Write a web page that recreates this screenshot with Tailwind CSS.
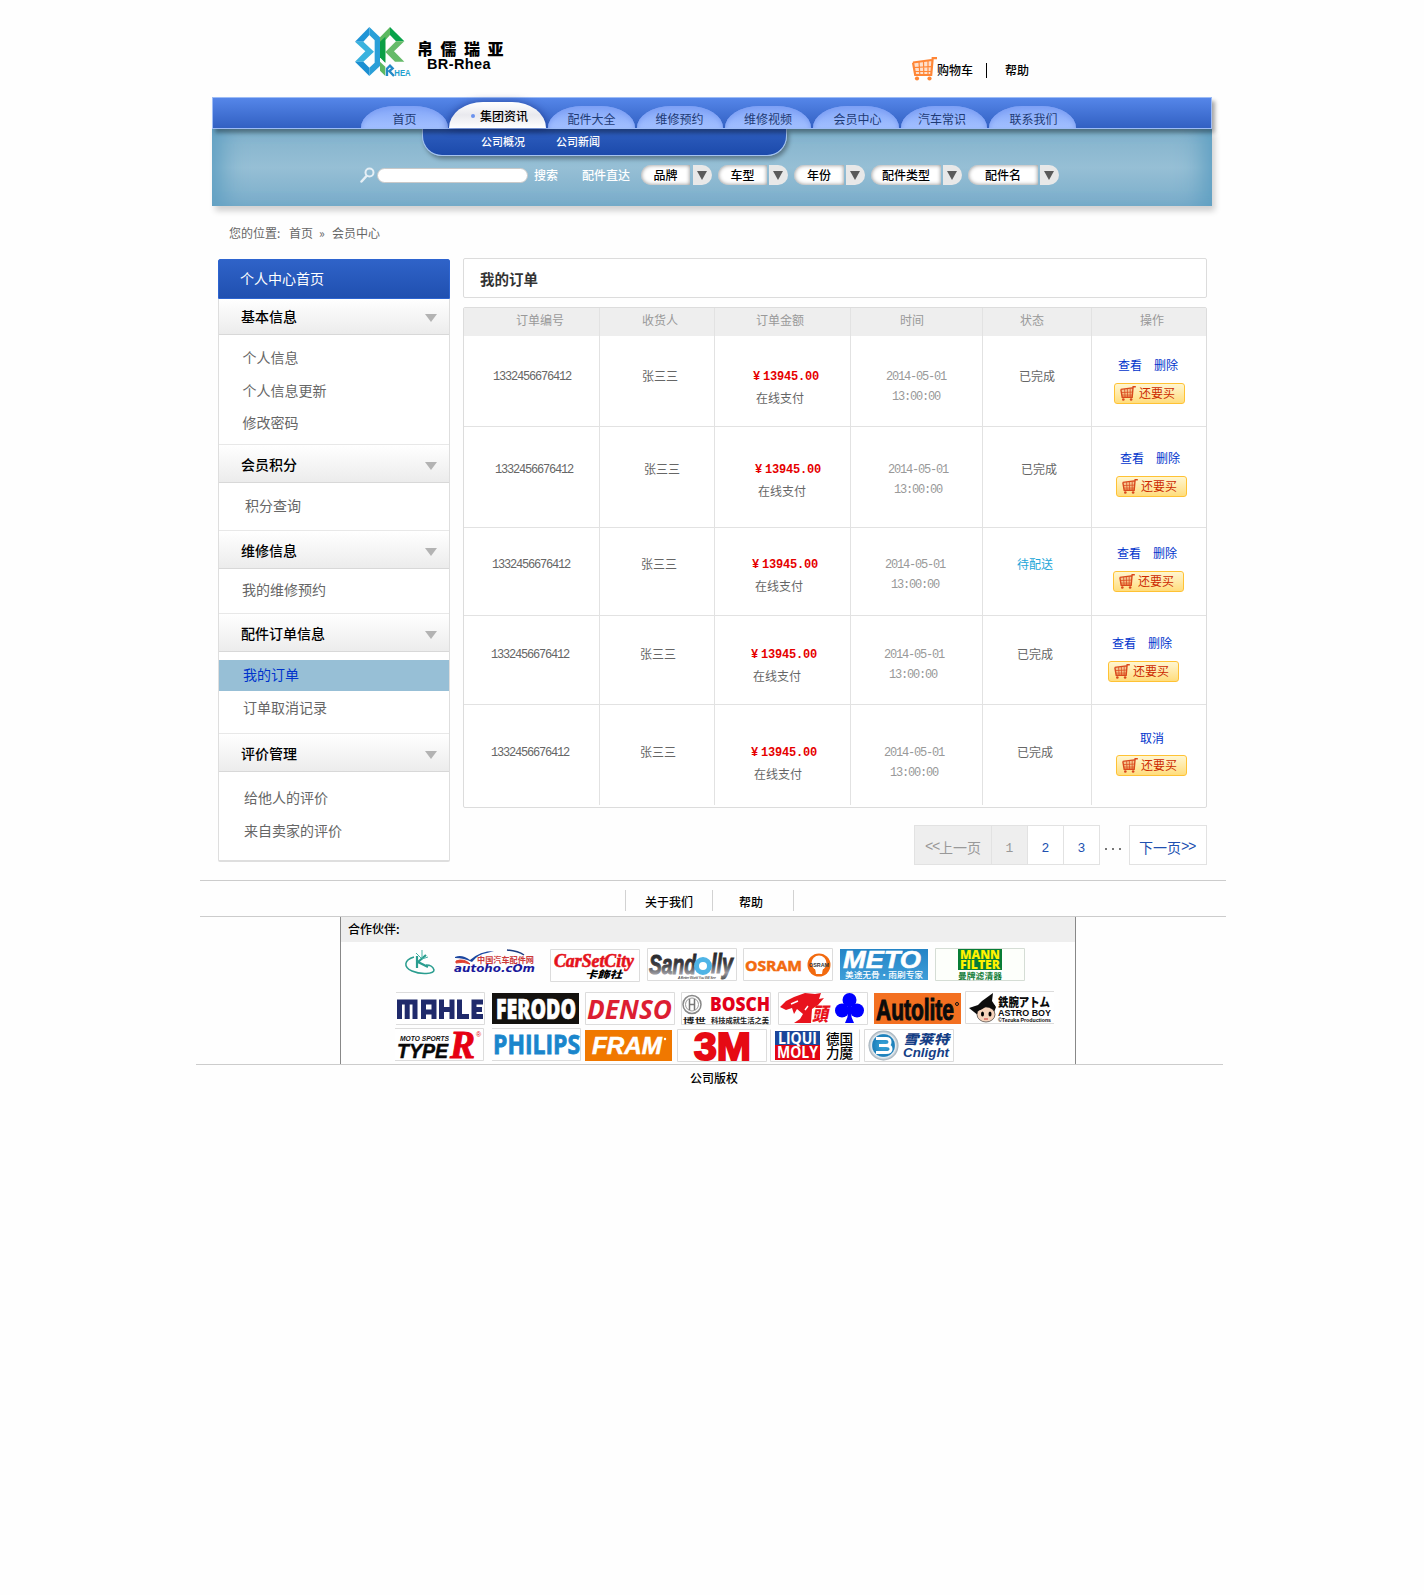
<!DOCTYPE html>
<html lang="zh-CN">
<head>
<meta charset="utf-8">
<title>我的订单</title>
<script src="https://cdn.jsdelivr.net/npm/@tailwindcss/browser@4"></script>
</head>
<body class="bg-[#fefefe]">
<svg class="absolute size-0">
  <defs>
    <symbol id="cart" viewBox="0 0 25 24">
      <path d="M1 6 20.500 3 19.500 17.500H3Z" fill="currentColor" fill-opacity=".25"/>
      <path d="M1.500 10.500l18-.8M2.500 14.500h17M7 5l.8 12.500M11.500 4.500l.3 13M16 3.500v14" fill="none" stroke="currentColor" stroke-width="1.200"/>
      <path d="M1 5.500 19.500 3M1 5.500 3.200 18H19.200L20.700 1.200H25" fill="none" stroke="currentColor" stroke-width="2.200"/>
      <circle cx="5" cy="21.500" r="2.100" fill="currentColor"/><circle cx="17.500" cy="21.500" r="2.100" fill="currentColor"/>
    </symbol>
    <linearGradient id="silver" x1="0" x2="0" y1="0" y2="1"><stop offset="0" stop-color="#1c1c1e"/><stop offset=".5" stop-color="#3c3c40"/><stop offset=".8" stop-color="#9a9aa0"/><stop offset="1" stop-color="#555"/></linearGradient>
    <linearGradient id="sky" x1="0" x2="0" y1="0" y2="1"><stop offset="0" stop-color="#2484c6"/><stop offset="1" stop-color="#3f9ed8"/></linearGradient>
    <radialGradient id="orb"><stop offset="0" stop-color="#3aa9dc"/><stop offset=".72" stop-color="#1d7fba"/><stop offset=".8" stop-color="#e8eef2"/><stop offset="1" stop-color="#9aa9b4"/></radialGradient>
  </defs>
</svg>
<div class="flex h-[1595px] w-[1424px] flex-col overflow-hidden font-['Noto_Sans_CJK_SC',sans-serif] text-[12px] leading-[18px] text-[#666]">

  <!-- Logo and account links -->
  <header class="flex h-[97px] shrink-0 items-start pl-[355px] text-black">
    <svg class="mt-[27px] h-[49px] w-[56px] overflow-visible" viewBox="465 51 168 147">
      <path d="M508 51 540 82V168L508 198V173L524 158V91L508 75Z" fill="#2a9fd8"/>
      <path d="M508 51 465 95H490L508 75Z" fill="#1f94d6"/>
      <path d="M465 95H490L522 125 490 155H465L496 124Z" fill="#3ab2de"/>
      <path d="M465 155 508 198V173L490 155Z" fill="#1b8fd2"/>
      <path d="M570 51 540 82V142L556 158V91L570 75Z" fill="#5cb860"/>
      <path d="M570 51 613 94H588L570 75Z" fill="#08a24a"/>
      <path d="M588 94H613L582 124 613 155H585L556 126Z" fill="#66bb6a"/>
      <path d="M540 95 556 80V158L540 142Z" fill="#0a9f45"/>
      <path d="M540 155 556 170V198L540 182Z" fill="#5cb860"/>
      <path d="M561 198V176L570 167 578 175 568 183 582 198" fill="none" stroke="#2389c6" stroke-width="7"/>
      <text x="583" y="197" font-family="Liberation Sans" font-size="27" font-weight="bold" fill="#1fa0cf" textLength="49" lengthAdjust="spacingAndGlyphs">HEA</text>
    </svg>
    <div class="mt-[38px] ml-[6px] w-[96px]">
      <div class="h-[20px] text-[16px] leading-[20px] font-black tracking-[7.500px] whitespace-nowrap">帛儒瑞亚</div>
      <div class="pl-[10px] font-['Liberation_Sans',sans-serif] text-[14.500px] leading-[13px] font-bold tracking-[0.400px] whitespace-nowrap">BR-Rhea</div>
    </div>
    <svg class="mt-[57px] ml-[399px] h-[24px] w-[25px] text-[#ff8636]"><use href="#cart"/></svg>
    <span class="mt-[61px] font-medium">购物车</span>
    <span class="mt-[63px] ml-[13px] h-[15px] w-px bg-black"></span>
    <span class="mt-[61px] ml-[18px] font-medium">帮助</span>
  </header>

  <!-- Navigation -->
  <nav class="relative z-10 ml-[212px] flex h-[32px] w-[1000px] shrink-0 items-end border border-[#9dbcf6] bg-linear-to-b from-[#5586e9] to-[#3260c2] pl-[148px] text-[#1d3a75] shadow-[3px_4px_4px_rgba(0,0,0,0.35)]">
    <a class="h-[22px] w-[87px] rounded-[34px_34px_0_0/22px_22px_0_0] bg-linear-to-b from-[#82a5f8] to-[#a3c0ff] text-center leading-[26px] shadow-[inset_0_2px_5px_#7d9ff4]">首页</a>
    <a class="ml-px flex h-[26px] w-[97px] items-center rounded-[34px_34px_0_0/26px_26px_0_0] bg-linear-to-b from-white via-[#e9e9ee] to-white pt-[2px] pl-[22px] font-medium text-black shadow-[0_0_9px_rgba(10,30,110,0.6)]"><i class="mr-[5px] size-[4px] rounded-full bg-[#6a92ee]"></i>集团资讯</a>
    <a class="ml-[2px] h-[22px] w-[87px] rounded-[34px_34px_0_0/22px_22px_0_0] bg-linear-to-b from-[#82a5f8] to-[#a3c0ff] text-center leading-[26px] shadow-[inset_0_2px_5px_#7d9ff4]">配件大全</a>
    <a class="ml-[2px] h-[22px] w-[86px] rounded-[34px_34px_0_0/22px_22px_0_0] bg-linear-to-b from-[#82a5f8] to-[#a3c0ff] pr-[1px] text-center leading-[26px] shadow-[inset_0_2px_5px_#7d9ff4]">维修预约</a>
    <a class="ml-[2px] h-[22px] w-[86px] rounded-[34px_34px_0_0/22px_22px_0_0] bg-linear-to-b from-[#82a5f8] to-[#a3c0ff] text-center leading-[26px] shadow-[inset_0_2px_5px_#7d9ff4]">维修视频</a>
    <a class="ml-[2px] h-[22px] w-[86px] rounded-[34px_34px_0_0/22px_22px_0_0] bg-linear-to-b from-[#82a5f8] to-[#a3c0ff] pl-[3px] text-center leading-[26px] shadow-[inset_0_2px_5px_#7d9ff4]">会员中心</a>
    <a class="ml-[2px] h-[22px] w-[86px] rounded-[34px_34px_0_0/22px_22px_0_0] bg-linear-to-b from-[#82a5f8] to-[#a3c0ff] pr-[4px] text-center leading-[26px] shadow-[inset_0_2px_5px_#7d9ff4]">汽车常识</a>
    <a class="ml-[2px] h-[22px] w-[87px] rounded-[34px_34px_0_0/22px_22px_0_0] bg-linear-to-b from-[#82a5f8] to-[#a3c0ff] pl-[2px] text-center leading-[26px] shadow-[inset_0_2px_5px_#7d9ff4]">联系我们</a>
  </nav>
  <section class="ml-[212px] h-[77px] w-[1000px] shrink-0 bg-linear-to-b from-[#82b2cc] via-[#96bfd5] to-[#7aadca] shadow-[inset_24px_0_24px_-14px_#5f9fc2,inset_-24px_0_24px_-14px_#5f9fc2,3px_5px_6px_rgba(0,0,0,0.18)]">
    <div class="ml-[210px] flex h-[27px] w-[365px] rounded-b-[20px] border border-t-0 border-[#a5c3f0] bg-linear-to-b from-[#2f5fc0] to-[#1c4aab] pl-[58px] text-[11px] leading-[25px] font-medium text-white shadow-[2px_3px_4px_rgba(0,0,0,0.35)]">
      <span class="w-[75px]">公司概况</span><span>公司新闻</span>
    </div>
    <div class="mt-[9px] flex h-[20px] items-center pl-[148px] text-[12px] text-white">
      <svg class="h-[16px] w-[15px]" viewBox="0 0 15 16"><circle cx="9.500" cy="5.500" r="4" fill="none" stroke="#e6eff5" stroke-width="2"/><path d="M6.500 9 1.500 14.500" stroke="#e6eff5" stroke-width="2.500" stroke-linecap="round"/></svg>
      <span class="ml-[2px] h-[15px] w-[151px] rounded-full border border-[#c9c9c9] bg-white"></span>
      <span class="ml-[6px] font-medium">搜索</span>
      <span class="ml-[24px] w-[48px] font-medium">配件直达</span>
      <span class="ml-[11px] flex h-[20px] w-[49px] items-center justify-center rounded-l-full bg-white pb-px font-medium text-black shadow-[inset_0_0_4px_#888]">品牌</span>
      <span class="ml-[3px] flex h-[20px] w-[19px] items-center justify-center rounded-r-full bg-[#e8e8e8] pr-[2px]"><i class="size-0 border-x-[5px] border-t-[9px] border-x-transparent border-t-[#5a5a5a]"></i></span>
      <span class="ml-[6px] flex h-[20px] w-[49px] items-center justify-center rounded-l-full bg-white pb-px font-medium text-black shadow-[inset_0_0_4px_#888]">车型</span>
      <span class="ml-[2px] flex h-[20px] w-[19px] items-center justify-center rounded-r-full bg-[#e8e8e8] pr-[2px]"><i class="size-0 border-x-[5px] border-t-[9px] border-x-transparent border-t-[#5a5a5a]"></i></span>
      <span class="ml-[6px] flex h-[20px] w-[50px] items-center justify-center rounded-l-full bg-white pb-px font-medium text-black shadow-[inset_0_0_4px_#888]">年份</span>
      <span class="ml-[2px] flex h-[20px] w-[19px] items-center justify-center rounded-r-full bg-[#e8e8e8] pr-[2px]"><i class="size-0 border-x-[5px] border-t-[9px] border-x-transparent border-t-[#5a5a5a]"></i></span>
      <span class="ml-[6px] flex h-[20px] w-[70px] items-center justify-center rounded-l-full bg-white pb-px font-medium text-black shadow-[inset_0_0_4px_#888]">配件类型</span>
      <span class="ml-[2px] flex h-[20px] w-[19px] items-center justify-center rounded-r-full bg-[#e8e8e8] pr-[2px]"><i class="size-0 border-x-[5px] border-t-[9px] border-x-transparent border-t-[#5a5a5a]"></i></span>
      <span class="ml-[6px] flex h-[20px] w-[70px] items-center justify-center rounded-l-full bg-white pb-px font-medium text-black shadow-[inset_0_0_4px_#888]">配件名</span>
      <span class="ml-[2px] flex h-[20px] w-[19px] items-center justify-center rounded-r-full bg-[#e8e8e8] pr-[2px]"><i class="size-0 border-x-[5px] border-t-[9px] border-x-transparent border-t-[#5a5a5a]"></i></span>
    </div>
  </section>

  <!-- Breadcrumb -->
  <div class="flex h-[52px] shrink-0 pt-[18px] pl-[229px]"><span class="w-[60px]">您的位置:</span><span class="w-[30px]">首页</span><span class="w-[13px]">»</span><span>会员中心</span></div>

  <main class="flex h-[622px] shrink-0 items-start pl-[218px]">
    <!-- Sidebar -->
    <aside class="mt-px h-[603px] w-[232px] rounded-[2px] text-[14px] leading-[20px]">
      <h2 class="h-[40px] rounded-t-[2px] border border-[#2d64d0] bg-linear-to-b from-[#2f63c8] to-[#2050b0] pl-[21px] leading-[37px] text-white">个人中心首页</h2>
      <div class="h-[563px] rounded-b-[2px] border-x border-b-2 border-[#dedede] bg-white">
        <h3 class="flex h-[36px] items-center justify-between border-b border-[#d8d8d8] bg-linear-to-b from-white to-[#ececec] pr-[12px] pb-px pl-[22px] font-medium text-black">基本信息<i class="mt-[3px] size-0 border-x-[6px] border-t-[8px] border-x-transparent border-t-[#b3b3b3]"></i></h3>
        <div class="flex h-[109px] flex-col gap-[12.500px] pt-[12px] pl-[23.500px]"><a>个人信息</a><a>个人信息更新</a><a>修改密码</a></div>
        <h3 class="flex h-[39px] items-center justify-between border-y border-t-[#e8e8e8] border-b-[#d8d8d8] bg-linear-to-b from-white to-[#ececec] pt-px pr-[12px] pl-[22px] font-medium text-black">会员积分<i class="mt-[3px] size-0 border-x-[6px] border-t-[8px] border-x-transparent border-t-[#b3b3b3]"></i></h3>
        <div class="h-[47px] pt-[12px] pl-[26px]"><a>积分查询</a></div>
        <h3 class="flex h-[39px] items-center justify-between border-y border-t-[#e8e8e8] border-b-[#d8d8d8] bg-linear-to-b from-white to-[#ececec] pt-px pr-[12px] pl-[22px] font-medium text-black">维修信息<i class="mt-[3px] size-0 border-x-[6px] border-t-[8px] border-x-transparent border-t-[#b3b3b3]"></i></h3>
        <div class="h-[44px] pt-[10px] pl-[23px]"><a>我的维修预约</a></div>
        <h3 class="flex h-[39px] items-center justify-between border-y border-t-[#e8e8e8] border-b-[#d8d8d8] bg-linear-to-b from-white to-[#ececec] pt-px pr-[12px] pl-[22px] font-medium text-black">配件订单信息<i class="mt-[3px] size-0 border-x-[6px] border-t-[8px] border-x-transparent border-t-[#b3b3b3]"></i></h3>
        <div class="flex h-[81px] flex-col pt-[8px]"><a class="h-[31px] bg-[#97bfd6] pl-[24px] leading-[29px] text-[#0033cc]">我的订单</a><a class="mt-[6px] pl-[24px]">订单取消记录</a></div>
        <h3 class="flex h-[39px] items-center justify-between border-y border-t-[#e8e8e8] border-b-[#d8d8d8] bg-linear-to-b from-white to-[#ececec] pt-px pr-[12px] pl-[22px] font-medium text-black">评价管理<i class="mt-[3px] size-0 border-x-[6px] border-t-[8px] border-x-transparent border-t-[#b3b3b3]"></i></h3>
        <div class="flex flex-col gap-[13px] pt-[15px] pl-[25px]"><a>给他人的评价</a><a>来自卖家的评价</a></div>
      </div>
    </aside>

    <!-- Orders -->
    <section class="ml-[13px] w-[744px]">
      <h1 class="h-[40px] rounded-[2px] border border-[#dcdcdc] bg-white pl-[16px] text-[14.500px] leading-[39px] font-bold text-[#333]">我的订单</h1>
      <div class="mt-[9px] rounded-[2px] border border-[#dcdcdc] bg-white">
        <div class="grid h-[28px] grid-cols-[136px_115px_136px_132px_109px_114px] bg-[#eee] leading-[24px] text-[#999]">
          <span class="border-r border-[#e2e2e2] pl-[52px]">订单编号</span><span class="border-r border-[#e2e2e2] pl-[42px]">收货人</span><span class="border-r border-[#e2e2e2] pl-[41px]">订单金额</span><span class="border-r border-[#e2e2e2] pl-[49px]">时间</span><span class="border-r border-[#e2e2e2] pl-[37px]">状态</span><span class="pl-[48px]">操作</span>
        </div>
        <div class="grid h-[91px] grid-cols-[136px_115px_136px_132px_109px_114px] border-b border-[#e2e2e2]">
          <div class="border-r border-[#e2e2e2] pt-[32px] pl-[29px] font-['Liberation_Mono',monospace] tracking-[-1.200px]">1332456676412</div>
          <div class="border-r border-[#e2e2e2] pt-[31px] pl-[42px]">张三三</div>
          <div class="border-r border-[#e2e2e2] pt-[32px] pl-[38px]"><p class="flex gap-[3px] font-['Liberation_Mono',monospace] font-bold tracking-[-0.200px] text-[#e60000]"><span>¥</span><span>13945.00</span></p><p class="mt-[3px] pl-[3px]">在线支付</p></div>
          <div class="border-r border-[#e2e2e2] pt-[32px] pl-[35px] font-['Liberation_Mono',monospace] tracking-[-1.200px] text-[#999]"><p>2014-05-01</p><p class="mt-[2px] pl-[6px]">13:00:00</p></div>
          <div class="border-r border-[#e2e2e2] pt-[31px] pl-[36px]">已完成</div>
          <div class="pt-[20px] pl-[22px]"><p class="flex gap-[12px] pl-[4px] text-[#0033cc]"><a>查看</a><a>删除</a></p><a class="mt-[9px] flex h-[21px] w-[71px] items-center rounded-[3px] border border-[#ffc234] bg-linear-to-b from-[#fff6d0] to-[#ffdd7c] pb-px pl-[5px] text-[#cc2a00]"><svg class="mr-[3px] h-[15px] w-[16px] text-[#d9481c]"><use href="#cart"/></svg>还要买</a></div>
        </div>
        <div class="grid h-[101px] grid-cols-[136px_115px_136px_132px_109px_114px] border-b border-[#e2e2e2]">
          <div class="border-r border-[#e2e2e2] pt-[34px] pl-[31px] font-['Liberation_Mono',monospace] tracking-[-1.200px]">1332456676412</div>
          <div class="border-r border-[#e2e2e2] pt-[33px] pl-[44px]">张三三</div>
          <div class="border-r border-[#e2e2e2] pt-[34px] pl-[40px]"><p class="flex gap-[3px] font-['Liberation_Mono',monospace] font-bold tracking-[-0.200px] text-[#e60000]"><span>¥</span><span>13945.00</span></p><p class="mt-[3px] pl-[3px]">在线支付</p></div>
          <div class="border-r border-[#e2e2e2] pt-[34px] pl-[37px] font-['Liberation_Mono',monospace] tracking-[-1.200px] text-[#999]"><p>2014-05-01</p><p class="mt-[2px] pl-[6px]">13:00:00</p></div>
          <div class="border-r border-[#e2e2e2] pt-[33px] pl-[38px]">已完成</div>
          <div class="pt-[22px] pl-[24px]"><p class="flex gap-[12px] pl-[4px] text-[#0033cc]"><a>查看</a><a>删除</a></p><a class="mt-[9px] flex h-[21px] w-[71px] items-center rounded-[3px] border border-[#ffc234] bg-linear-to-b from-[#fff6d0] to-[#ffdd7c] pb-px pl-[5px] text-[#cc2a00]"><svg class="mr-[3px] h-[15px] w-[16px] text-[#d9481c]"><use href="#cart"/></svg>还要买</a></div>
        </div>
        <div class="grid h-[88px] grid-cols-[136px_115px_136px_132px_109px_114px] border-b border-[#e2e2e2]">
          <div class="border-r border-[#e2e2e2] pt-[28px] pl-[28px] font-['Liberation_Mono',monospace] tracking-[-1.200px]">1332456676412</div>
          <div class="border-r border-[#e2e2e2] pt-[27px] pl-[41px]">张三三</div>
          <div class="border-r border-[#e2e2e2] pt-[28px] pl-[37px]"><p class="flex gap-[3px] font-['Liberation_Mono',monospace] font-bold tracking-[-0.200px] text-[#e60000]"><span>¥</span><span>13945.00</span></p><p class="mt-[3px] pl-[3px]">在线支付</p></div>
          <div class="border-r border-[#e2e2e2] pt-[28px] pl-[34px] font-['Liberation_Mono',monospace] tracking-[-1.200px] text-[#999]"><p>2014-05-01</p><p class="mt-[2px] pl-[6px]">13:00:00</p></div>
          <div class="border-r border-[#e2e2e2] pt-[27px] pl-[34px] text-[#22a6d8]">待配送</div>
          <div class="pt-[16px] pl-[21px]"><p class="flex gap-[12px] pl-[4px] text-[#0033cc]"><a>查看</a><a>删除</a></p><a class="mt-[9px] flex h-[21px] w-[71px] items-center rounded-[3px] border border-[#ffc234] bg-linear-to-b from-[#fff6d0] to-[#ffdd7c] pb-px pl-[5px] text-[#cc2a00]"><svg class="mr-[3px] h-[15px] w-[16px] text-[#d9481c]"><use href="#cart"/></svg>还要买</a></div>
        </div>
        <div class="grid h-[89px] grid-cols-[136px_115px_136px_132px_109px_114px] border-b border-[#e2e2e2]">
          <div class="border-r border-[#e2e2e2] pt-[30px] pl-[27px] font-['Liberation_Mono',monospace] tracking-[-1.200px]">1332456676412</div>
          <div class="border-r border-[#e2e2e2] pt-[29px] pl-[40px]">张三三</div>
          <div class="border-r border-[#e2e2e2] pt-[30px] pl-[36px]"><p class="flex gap-[3px] font-['Liberation_Mono',monospace] font-bold tracking-[-0.200px] text-[#e60000]"><span>¥</span><span>13945.00</span></p><p class="mt-[3px] pl-[2px]">在线支付</p></div>
          <div class="border-r border-[#e2e2e2] pt-[30px] pl-[33px] font-['Liberation_Mono',monospace] tracking-[-1.200px] text-[#999]"><p>2014-05-01</p><p class="mt-[2px] pl-[5px]">13:00:00</p></div>
          <div class="border-r border-[#e2e2e2] pt-[29px] pl-[34px]">已完成</div>
          <div class="pt-[18px] pl-[16px]"><p class="flex gap-[12px] pl-[4px] text-[#0033cc]"><a>查看</a><a>删除</a></p><a class="mt-[9px] flex h-[21px] w-[71px] items-center rounded-[3px] border border-[#ffc234] bg-linear-to-b from-[#fff6d0] to-[#ffdd7c] pb-px pl-[5px] text-[#cc2a00]"><svg class="mr-[3px] h-[15px] w-[16px] text-[#d9481c]"><use href="#cart"/></svg>还要买</a></div>
        </div>
        <div class="grid h-[102px] grid-cols-[136px_115px_136px_132px_109px_114px] pb-[2px]">
          <div class="border-r border-[#e2e2e2] pt-[39px] pl-[27px] font-['Liberation_Mono',monospace] tracking-[-1.200px]">1332456676412</div>
          <div class="border-r border-[#e2e2e2] pt-[38px] pl-[40px]">张三三</div>
          <div class="border-r border-[#e2e2e2] pt-[39px] pl-[36px]"><p class="flex gap-[3px] font-['Liberation_Mono',monospace] font-bold tracking-[-0.200px] text-[#e60000]"><span>¥</span><span>13945.00</span></p><p class="mt-[3px] pl-[3px]">在线支付</p></div>
          <div class="border-r border-[#e2e2e2] pt-[39px] pl-[33px] font-['Liberation_Mono',monospace] tracking-[-1.200px] text-[#999]"><p>2014-05-01</p><p class="mt-[2px] pl-[6px]">13:00:00</p></div>
          <div class="border-r border-[#e2e2e2] pt-[38px] pl-[34px]">已完成</div>
          <div class="pt-[24px] pl-[24px]"><p class="pl-[24px] text-[#0033cc]"><a>取消</a></p><a class="mt-[8px] flex h-[21px] w-[71px] items-center rounded-[3px] border border-[#ffc234] bg-linear-to-b from-[#fff6d0] to-[#ffdd7c] pb-px pl-[5px] text-[#cc2a00]"><svg class="mr-[3px] h-[15px] w-[16px] text-[#d9481c]"><use href="#cart"/></svg>还要买</a></div>
        </div>
      </div>
      <!-- Pagination -->
      <div class="mt-[17px] flex h-[40px] justify-end text-[14px] leading-[42px] text-[#2050b0]">
        <a class="flex w-[78px] border border-[#e2e2e2] bg-[#eee] pl-[10px] text-[#999]"><span class="w-[14px] font-['Liberation_Mono',monospace] tracking-[-1.400px]">&lt;&lt;</span>上一页</a>
        <a class="w-[36px] border-y border-r border-[#e2e2e2] bg-[#eee] text-center font-['Liberation_Mono',monospace] text-[13px] leading-[46px] text-[#999]">1</a>
        <a class="w-[36px] border-y border-r border-[#e2e2e2] bg-white text-center font-['Liberation_Mono',monospace] text-[13px] leading-[46px]">2</a>
        <a class="w-[36px] border-y border-r border-[#e2e2e2] bg-white text-center font-['Liberation_Mono',monospace] text-[13px] leading-[46px]">3</a>
        <span class="flex w-[29px] items-center justify-center gap-[5px] pt-[8px] pr-[3px]"><i class="size-[2px] bg-[#777]"></i><i class="size-[2px] bg-[#777]"></i><i class="size-[2px] bg-[#777]"></i></span>
        <a class="flex w-[78px] border border-[#e2e2e2] bg-white pl-[9px]">下一页<span class="font-['Liberation_Mono',monospace] tracking-[-1.400px]">&gt;&gt;</span></a>
      </div>
    </section>
  </main>

  <!-- Footer links -->
  <div class="ml-[200px] flex h-[37px] w-[1026px] shrink-0 items-start border-y border-[#ccc] pt-[9px] pl-[425px] font-medium text-black">
    <span class="flex h-[21px] w-[87px] items-center border-l border-[#d2d2d2] pt-[2px] pl-[19px]">关于我们</span>
    <span class="flex h-[21px] w-[82px] items-center border-x border-[#d2d2d2] pt-[2px] pl-[26px]">帮助</span>
  </div>

  <!-- Partners -->
  <section class="ml-[196px] h-[148px] w-[1027px] shrink-0 border-b border-[#ccc] pl-[144px]">
    <div class="h-[147px] w-[736px] border-x border-[#888]">
      <h4 class="h-[25px] bg-[#eee] pl-[7px] leading-[24px] font-medium text-black">合作伙伴:</h4>
      <div class="mt-[6px] flex h-[43px] items-start pl-[63px]">
        <svg class="mt-[2px] h-[26px] w-[32px] overflow-visible" viewBox="0 0 32 26"><path d="M10 7C0 10-1 17 8 21S30 24 30 20C29 16 25 15 22 15" fill="none" stroke="#2a9d8f" stroke-width="1.500"/><path d="M13 6V18M22 5 14 12 24 17" fill="none" stroke="#2a9d8f" stroke-width="2.200"/><path d="M18 0V8M12 3 17 8M24 7 18 9" stroke="#49b3a6"/></svg>
        <svg class="mt-[2px] ml-[18px] h-[24px] w-[82px] overflow-visible" viewBox="0 0 82 24"><path d="M1 7Q8 4 16 10 26 1 40 1L33 3Q24 4 18 12 10 8 1 8Z" fill="#1c47a0"/><path d="M53 0Q64 1 70 5" fill="none" stroke="#1c3b80" stroke-width="1.500"/><path d="M2 11Q10 8 16 14Q9 11 2 13Z" fill="#e04030" stroke="#e04030"/><text x="23" y="12.500" font-family="Noto Sans CJK SC" font-weight="bold" font-size="8" fill="#cc3a3a" textLength="57" lengthAdjust="spacingAndGlyphs">中国汽车配件网</text><text x="0" y="22" font-family="DejaVu Sans" font-weight="bold" font-style="italic" font-size="11" fill="#1a1a9c" textLength="81" lengthAdjust="spacingAndGlyphs">autoho.cOm</text></svg>
        <svg class="mt-px ml-[14px] h-[33px] w-[90px] overflow-visible" viewBox="0 0 90 33"><path d="M.5.5H89.500V32.500H.5Z" fill="#fff" stroke="#dcdcdc"/><g font-style="italic" font-weight="bold"><text x="4" y="18" font-family="Liberation Serif" font-size="18" fill="#e5121b" stroke="#e5121b" stroke-width=".6" textLength="80" lengthAdjust="spacingAndGlyphs">CarSetCity</text><text x="35" y="29" font-family="Noto Sans CJK SC" font-weight="900" font-size="10" fill="#000" textLength="37" lengthAdjust="spacingAndGlyphs">卡飾社</text></g></svg>
        <svg class="ml-[7px] h-[33px] w-[90px] overflow-visible" viewBox="0 0 90 33"><path d="M.5.5H89.500V32.500H.5Z" fill="#fff" stroke="#dcdcdc"/><g font-family="Liberation Sans" font-weight="bold" font-style="italic" fill="url(#silver)" stroke="url(#silver)"><text x="2" y="26" font-size="28" textLength="47" lengthAdjust="spacingAndGlyphs">Sand</text><text x="64" y="25" font-size="28" textLength="22" lengthAdjust="spacingAndGlyphs">lly</text></g><circle cx="56" cy="18" r="6.500" fill="#fff" stroke="#4fb4e6" stroke-width="5"/><text x="31" y="31" font-family="Liberation Sans" font-style="italic" font-size="3.500" fill="#222" textLength="38">A Better World You Will See</text></svg>
        <svg class="ml-[6px] h-[33px] w-[90px] overflow-visible" viewBox="0 0 90 33"><path d="M.5.5H89.500V32.500H.5Z" fill="#fff" stroke="#dcdcdc"/><text x="2" y="22.500" font-family="Open Sans" font-weight="bold" font-size="15" fill="#f26a0f" stroke="#f26a0f" stroke-width=".5" textLength="57" lengthAdjust="spacingAndGlyphs">OSRAM</text><circle cx="76" cy="17" r="11.500" fill="#f26a0f"/><circle cx="76" cy="15" r="7.500" fill="#fff"/><path d="M72 20H80L79 26H73Z" fill="#fff"/><text x="66" y="19" font-family="Liberation Sans" font-weight="bold" font-size="6" fill="#333" textLength="20" lengthAdjust="spacingAndGlyphs">OSRAM</text></svg>
        <svg class="mt-px ml-[7px] h-[31px] w-[88px] overflow-visible" viewBox="0 0 88 31"><rect width="88" height="31" fill="url(#sky)"/><text x="3" y="19" font-family="Liberation Sans" font-weight="bold" font-style="italic" font-size="23" fill="#fff" stroke="#fff" stroke-width=".5" textLength="78" lengthAdjust="spacingAndGlyphs">METO</text><text x="5" y="28.500" font-family="Noto Sans CJK SC" font-weight="500" font-size="8.500" fill="#fff" textLength="78" lengthAdjust="spacingAndGlyphs">美途无骨•雨刷专家</text></svg>
        <svg class="ml-[7px] h-[33px] w-[90px] overflow-visible" viewBox="0 0 90 33"><path d="M.5.5H89.500V32.500H.5Z" fill="#fdfffb" stroke="#d5ddd5"/><rect x="23" y="1" width="44" height="21" fill="#087d35"/><g font-family="Open Sans" font-weight="800" font-size="11.500" fill="#fff200"><text x="25" y="10.500" textLength="40" lengthAdjust="spacingAndGlyphs">MANN</text><text x="25" y="20.500" textLength="40" lengthAdjust="spacingAndGlyphs">FILTER</text></g><text x="23" y="31" font-family="Noto Sans CJK SC" font-weight="bold" font-size="8.500" fill="#16803b" textLength="44" lengthAdjust="spacingAndGlyphs">曼牌滤清器</text></svg>
      </div>
      <div class="flex h-[37px] items-start pl-[55px]">
        <svg class="mt-px h-[33px] w-[89px] overflow-visible" viewBox="0 0 89 33"><path d="M0 .5H88.500V32.500H0" fill="#fff" stroke="#dcdcdc"/><g fill="none" stroke="#1f2a6b" stroke-width="5"><path d="M3.500 27V10H19V27M11.200 10V27M27.500 27V10H38V27M28 20H38M45.500 7.500V27M56 7.500V27M45 17.500H56M63.500 7.500V24.500H73M87 10H78V24.500H87M78 17.500H86"/></g></svg>
        <svg class="mt-[2px] ml-[7px] h-[31px] w-[87px] overflow-visible" viewBox="0 0 87 31"><rect width="87" height="31" fill="#14120f"/><text x="4" y="26" font-family="Open Sans" font-weight="800" font-size="28" fill="#fff" stroke="#fff" stroke-width=".7" textLength="80" lengthAdjust="spacingAndGlyphs">FERODO</text></svg>
        <svg class="mt-px ml-[6px] h-[33px] w-[90px] overflow-visible" viewBox="0 0 90 33"><path d="M.5.5H89.500V32.500H.5Z" fill="#fff" stroke="#dcdcdc"/><text x="2" y="26.500" font-family="Open Sans" font-weight="bold" font-style="italic" font-size="27" fill="#dc1e32" textLength="85" lengthAdjust="spacingAndGlyphs">DENSO</text></svg>
        <svg class="mt-px ml-[6px] h-[33px] w-[90px] overflow-visible" viewBox="0 0 90 33"><path d="M.5.5H89.500V32.500H.5Z" fill="#fff" stroke="#dcdcdc"/><circle cx="11" cy="12.500" r="9" fill="none" stroke="#888" stroke-width="1.500"/><circle cx="11" cy="12.500" r="6.500" fill="none" stroke="#999"/><path d="M8.500 7V18M13.500 7V18M8.500 12.500H13.500" stroke="#777" stroke-width="1.500"/><text x="29" y="19" font-family="Open Sans" font-weight="800" font-size="19" fill="#e2001a" textLength="60" lengthAdjust="spacingAndGlyphs">BOSCH</text><g font-family="Noto Sans CJK SC" font-weight="bold" font-size="7" fill="#222"><text x="2" y="30.500" textLength="23" lengthAdjust="spacingAndGlyphs">博世</text><text x="30" y="30.500" textLength="58" lengthAdjust="spacingAndGlyphs">科技成就生活之美</text></g></svg>
        <svg class="mt-px ml-[7px] h-[33px] w-[90px] overflow-visible" viewBox="0 0 90 33"><path d="M.5.5H89.500V32.500H.5Z" fill="#fff" stroke="#dcdcdc"/><path d="M2 15 8 9 16 5 27 1 37 2 43 1 41 7 46 6 40 13 34 17 33 31H16L22 27 25 22 19 17 16 22 14 16 8 18Z" fill="#e8131d"/><path d="M13 12 20 9M27 18 30 14" stroke="#fff" stroke-width="1.500"/><text x="34" y="28.500" font-family="Noto Sans CJK JP" font-weight="900" font-style="italic" font-size="19" fill="#e8131d" textLength="16" lengthAdjust="spacingAndGlyphs">頭</text><g fill="#00f"><circle cx="71.500" cy="8" r="7"/><circle cx="64" cy="18.500" r="7"/><circle cx="79" cy="18.500" r="7"/><path d="M70 10H73L73.500 25 76 31H67L69.500 25Z"/></g></svg>
        <svg class="mt-[2px] ml-[6px] h-[31px] w-[87px] overflow-visible" viewBox="0 0 87 31"><rect width="87" height="31" fill="#f37021"/><text x="2" y="26.500" font-family="Liberation Sans Narrow, Liberation Sans" font-weight="bold" font-size="29" fill="#0b0b0b" stroke="#0b0b0b" textLength="78" lengthAdjust="spacingAndGlyphs">Autolite</text><circle cx="83" cy="11" r="1.500" fill="none" stroke="#111"/></svg>
        <svg class="ml-[4px] h-[33px] w-[89px] overflow-visible" viewBox="0 0 89 33"><path d="M89 .5H.5V32.500H89" fill="#fff" stroke="#dcdcdc"/><path d="M4 17 13 14 17 10 28 2 27 10 31 16 28 24 14 25Z" fill="#0c0c0c"/><ellipse cx="21" cy="23.500" rx="9" ry="7.500" fill="#f6d3bb" stroke="#222" stroke-width=".6"/><path d="M12 20Q20 18 21 14 26 18 30 18L30 14H14Z" fill="#0c0c0c"/><ellipse cx="17.500" cy="23" rx="1.500" ry="2.500"/><ellipse cx="25" cy="23" rx="1.500" ry="2.500"/><path d="M19 28H23" stroke="#c33"/><g font-weight="900" fill="#0b0b0b"><text x="33" y="16" font-family="Noto Sans CJK JP" font-size="12.500" textLength="52" lengthAdjust="spacingAndGlyphs">鉄腕アトム</text><text x="33" y="25" font-family="Liberation Sans" font-size="8.500" textLength="53" lengthAdjust="spacingAndGlyphs">ASTRO BOY</text><text x="33" y="31" font-family="Liberation Sans" font-size="5" textLength="53" lengthAdjust="spacingAndGlyphs">©Tezuka Productions</text></g></svg>
      </div>
      <div class="flex items-start pl-[54px]">
        <svg class="h-[33px] w-[89px] overflow-visible" viewBox="0 0 89 33"><path d="M0 .5H88.500V32.500H0" fill="#fff" stroke="#dcdcdc"/><g font-family="Liberation Sans" font-weight="bold" font-style="italic"><text x="5" y="12.500" font-size="7" fill="#111" textLength="49" lengthAdjust="spacingAndGlyphs">MOTO SPORTS</text><text x="2" y="29.500" font-size="20" fill="#080808" stroke="#080808" stroke-width=".5" textLength="51" lengthAdjust="spacingAndGlyphs">TYPE</text><text x="55" y="29.500" font-family="Liberation Serif" font-size="41" fill="#e60012" stroke="#e60012" textLength="25" lengthAdjust="spacingAndGlyphs">R</text></g><text x="81" y="9" font-family="Liberation Sans" font-size="7" fill="#e60012">®</text></svg>
        <svg class="ml-[8px] h-[33px] w-[89px] overflow-visible" viewBox="0 0 89 33"><path d="M0 .5H88.500V32.500H0" fill="#fff" stroke="#dcdcdc"/><text x="1" y="26" font-family="Open Sans" font-weight="bold" font-size="26" fill="#1a86cc" stroke="#1a86cc" stroke-width=".8" textLength="87" lengthAdjust="spacingAndGlyphs">PHILIPS</text></svg>
        <svg class="mt-[2px] ml-[4px] h-[31px] w-[87px] overflow-visible" viewBox="0 0 87 31"><rect width="87" height="31" fill="#f07800"/><text x="7" y="24" font-family="Liberation Sans" font-weight="bold" font-style="italic" font-size="23" fill="#fff" stroke="#fff" stroke-width=".5" textLength="70" lengthAdjust="spacingAndGlyphs">FRAM</text><circle cx="80" cy="9" r="1.200" fill="#fff"/></svg>
        <svg class="mt-px ml-[5px] h-[33px] w-[90px] overflow-visible" viewBox="0 0 90 33"><path d="M.5.5H89.500V32.500H.5Z" fill="#fff" stroke="#dcdcdc"/><text x="17" y="30.500" font-family="Liberation Sans" font-weight="bold" font-size="39" fill="#e60a14" stroke="#e60a14" stroke-width="2" textLength="57" lengthAdjust="spacingAndGlyphs">3M</text></svg>
        <svg class="mt-px ml-[3px] h-[33px] w-[90px] overflow-visible" viewBox="0 0 90 33"><path d="M.5.5V32.500H89.500V.5" fill="#fff" stroke="#dcdcdc"/><rect x="5" y="2" width="45" height="14" fill="#1a469b"/><rect x="5" y="16" width="45" height="15" fill="#e30613"/><g font-family="Open Sans" font-weight="bold" font-size="15.500" fill="#fff"><text x="8" y="14.800" textLength="39" lengthAdjust="spacingAndGlyphs">LIQUI</text><text x="7" y="29.300" textLength="41" lengthAdjust="spacingAndGlyphs">MOLY</text></g><g font-family="Noto Sans CJK SC" font-weight="500" font-size="13.500" fill="#000"><text x="56" y="14.500">德国</text><text x="56" y="28.500">力魔</text></g></svg>
        <svg class="mt-px ml-[4px] h-[33px] w-[90px] overflow-visible" viewBox="0 0 90 33"><path d="M.5.5H89.500V32.500H.5Z" fill="#fff" stroke="#dcdcdc"/><circle cx="19.500" cy="16.500" r="15" fill="url(#orb)"/><path d="M12 9.500H22Q26 9.500 26 13T22 16.500H15M22 16.500Q27 16.500 27 20T22 23.500H12" fill="none" stroke="#fff" stroke-width="3"/><g font-style="italic" font-weight="900" fill="#153e85"><text x="39" y="15" font-family="Noto Sans CJK SC" font-size="13" textLength="46" lengthAdjust="spacingAndGlyphs">雪莱特</text><text x="39" y="27.500" font-family="Liberation Sans" font-size="12.500" textLength="46" lengthAdjust="spacingAndGlyphs">Cnlight</text></g></svg>
      </div>
    </div>
  </section>
  <footer class="pt-[4px] pl-[690px] font-medium text-black">公司版权</footer>
</div>
</body>
</html>
